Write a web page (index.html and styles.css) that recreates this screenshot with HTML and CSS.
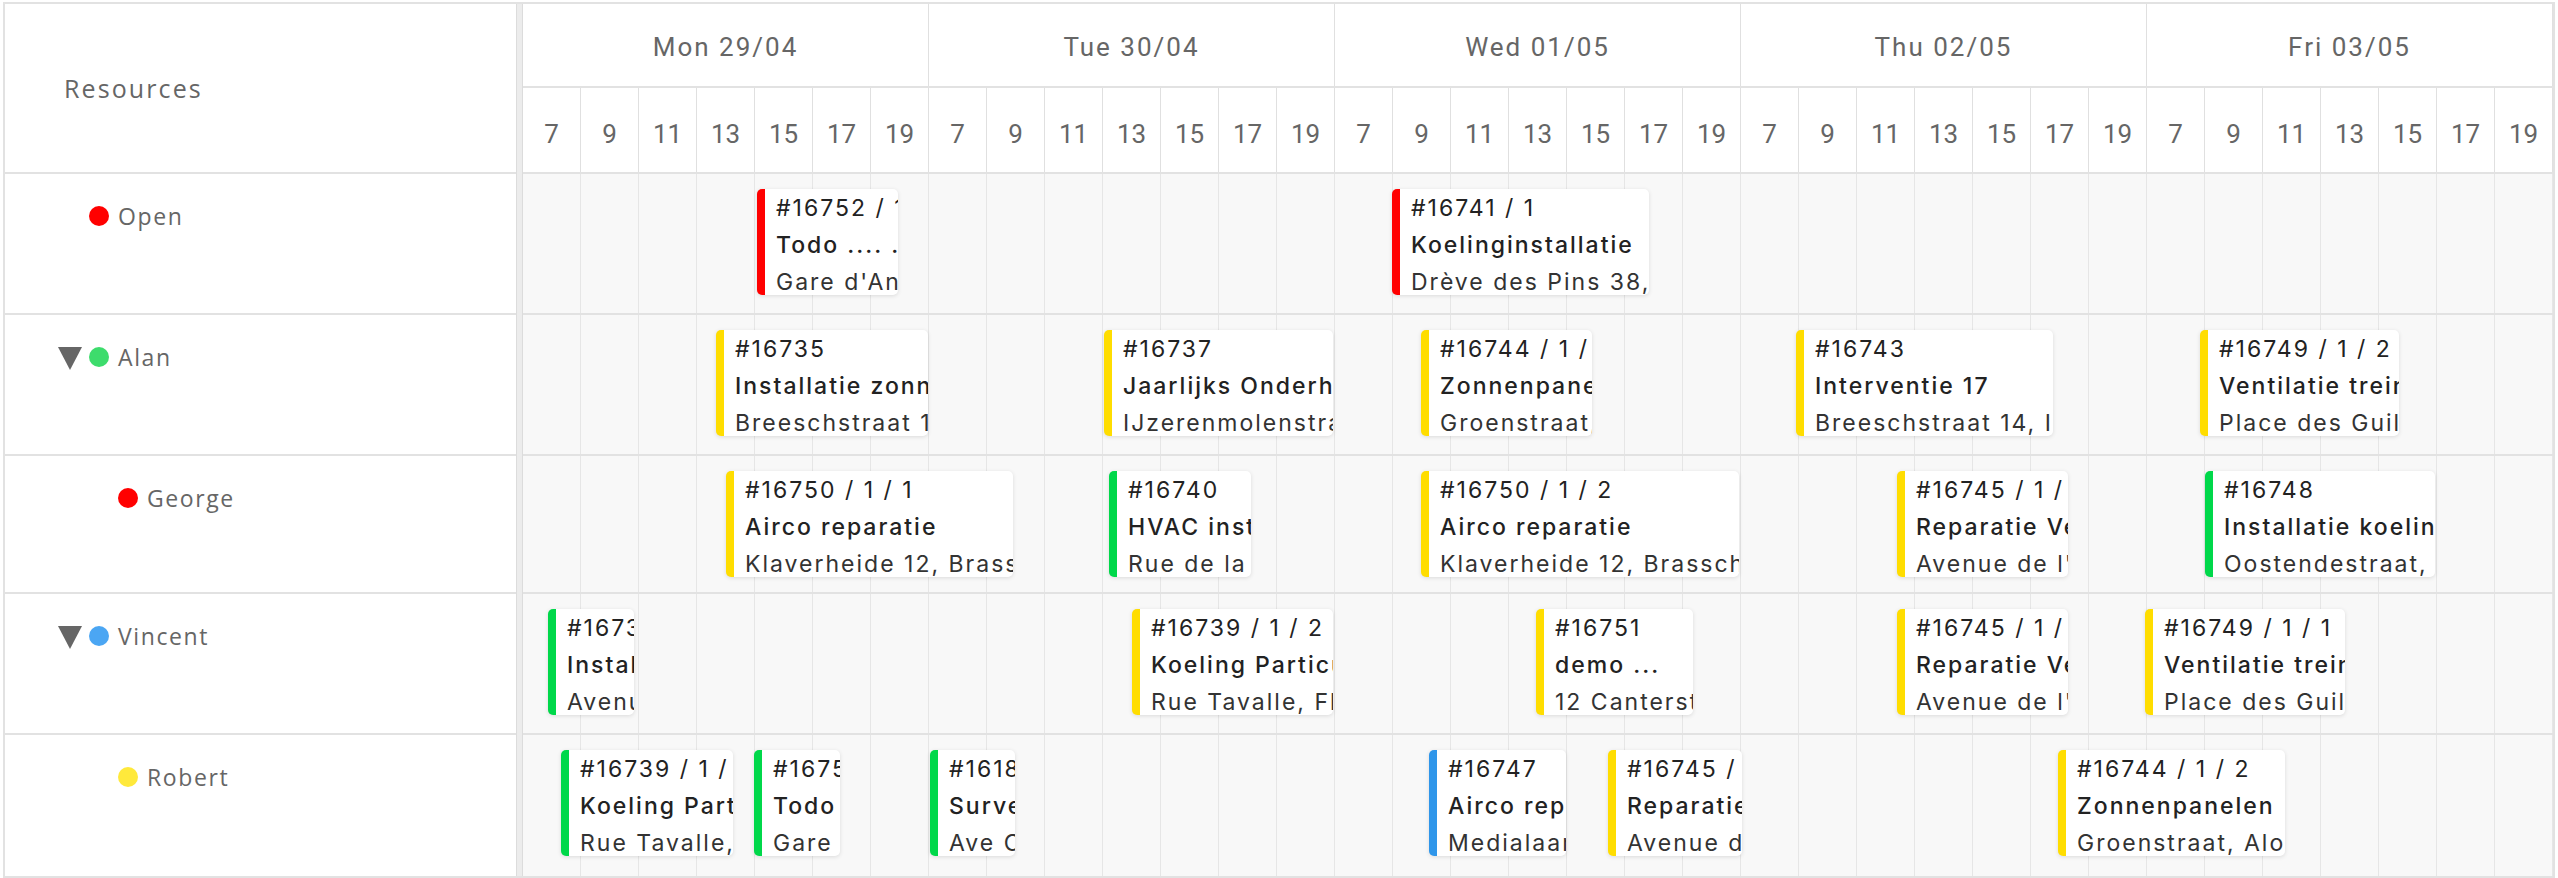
FILE: index.html
```html
<!DOCTYPE html>
<html lang="nl">
<head>
    <meta charset="UTF-8">
    <meta name="viewport" content="width=device-width, initial-scale=1.0">
    <title>Planning</title>
    <link rel="stylesheet" href="styles.css">
</head>
<body>
    <div class="scheduler">
        <!-- resources -->
        <div class="resource-pane">
            <div class="resource-head">Resources</div>
            <div class="resource-row">
                <span class="dot red"></span><span class="res-name">Open</span>
            </div>
            <div class="resource-row group">
                <svg class="caret" viewBox="0 0 24 24"><polygon points="0,1 24,1 12,24" fill="#666" /></svg>
                <span class="dot green"></span><span class="res-name">Alan</span>
            </div>
            <div class="resource-row child short">
                <span class="dot red"></span><span class="res-name">George</span>
            </div>
            <div class="resource-row group">
                <svg class="caret" viewBox="0 0 24 24"><polygon points="0,1 24,1 12,24" fill="#666" /></svg>
                <span class="dot blue"></span><span class="res-name">Vincent</span>
            </div>
            <div class="resource-row child last">
                <span class="dot yellow"></span><span class="res-name">Robert</span>
            </div>
        </div>

        <div class="splitter"></div>

        <!-- timeline -->
        <div class="timeline">
            <div class="day-row">
                <div class="day">Mon 29/04</div>
                <div class="day">Tue 30/04</div>
                <div class="day">Wed 01/05</div>
                <div class="day">Thu 02/05</div>
                <div class="day">Fri 03/05</div>
            </div>
            <div class="hour-row">
                <div class="hour">7</div><div class="hour">9</div><div class="hour">11</div><div class="hour">13</div><div class="hour">15</div><div class="hour">17</div><div class="hour">19</div>
                <div class="hour">7</div><div class="hour">9</div><div class="hour">11</div><div class="hour">13</div><div class="hour">15</div><div class="hour">17</div><div class="hour">19</div>
                <div class="hour">7</div><div class="hour">9</div><div class="hour">11</div><div class="hour">13</div><div class="hour">15</div><div class="hour">17</div><div class="hour">19</div>
                <div class="hour">7</div><div class="hour">9</div><div class="hour">11</div><div class="hour">13</div><div class="hour">15</div><div class="hour">17</div><div class="hour">19</div>
                <div class="hour">7</div><div class="hour">9</div><div class="hour">11</div><div class="hour">13</div><div class="hour">15</div><div class="hour">17</div><div class="hour">19</div>
            </div>

            <!-- Open -->
            <div class="lane">
                <div class="event red" style="left:234px;width:141px">
                    <div class="ev-id">#16752 / 1 / 1</div>
                    <div class="ev-title">Todo .... ....</div>
                    <div class="ev-addr">Gare d'Anvers 12, Brussel</div>
                </div>
                <div class="event red" style="left:869px;width:257px">
                    <div class="ev-id">#16741 / 1</div>
                    <div class="ev-title">Koelinginstallatie</div>
                    <div class="ev-addr">Drève des Pins 38, Bruxelles</div>
                </div>
            </div>

            <!-- Alan -->
            <div class="lane">
                <div class="event yellow" style="left:193px;width:212px">
                    <div class="ev-id">#16735</div>
                    <div class="ev-title">Installatie zonnepanelen</div>
                    <div class="ev-addr">Breeschstraat 14, Izegem</div>
                </div>
                <div class="event yellow" style="left:581px;width:229px">
                    <div class="ev-id">#16737</div>
                    <div class="ev-title">Jaarlijks Onderhoud</div>
                    <div class="ev-addr">IJzerenmolenstraat 4, Ieper</div>
                </div>
                <div class="event yellow" style="left:898px;width:171px">
                    <div class="ev-id">#16744 / 1 / 1</div>
                    <div class="ev-title">Zonnenpanelen</div>
                    <div class="ev-addr">Groenstraat, Alost</div>
                </div>
                <div class="event yellow" style="left:1273px;width:257px">
                    <div class="ev-id">#16743</div>
                    <div class="ev-title">Interventie 17</div>
                    <div class="ev-addr">Breeschstraat 14, Izegem</div>
                </div>
                <div class="event yellow" style="left:1677px;width:199px">
                    <div class="ev-id">#16749 / 1 / 2</div>
                    <div class="ev-title">Ventilatie trein</div>
                    <div class="ev-addr">Place des Guildes 5</div>
                </div>
            </div>

            <!-- George -->
            <div class="lane short">
                <div class="event yellow" style="left:203px;width:287px">
                    <div class="ev-id">#16750 / 1 / 1</div>
                    <div class="ev-title">Airco reparatie</div>
                    <div class="ev-addr">Klaverheide 12, Brasschaat</div>
                </div>
                <div class="event green" style="left:586px;width:142px">
                    <div class="ev-id">#16740</div>
                    <div class="ev-title">HVAC installatie</div>
                    <div class="ev-addr">Rue de la Loi 1</div>
                </div>
                <div class="event yellow" style="left:898px;width:318px">
                    <div class="ev-id">#16750 / 1 / 2</div>
                    <div class="ev-title">Airco reparatie</div>
                    <div class="ev-addr">Klaverheide 12, Brasschaat</div>
                </div>
                <div class="event yellow" style="left:1374px;width:171px">
                    <div class="ev-id">#16745 / 1 / 1</div>
                    <div class="ev-title">Reparatie Ventilatie</div>
                    <div class="ev-addr">Avenue de l'Europe</div>
                </div>
                <div class="event green" style="left:1682px;width:230px">
                    <div class="ev-id">#16748</div>
                    <div class="ev-title">Installatie koeling</div>
                    <div class="ev-addr">Oostendestraat, Roeselare</div>
                </div>
            </div>

            <!-- Vincent -->
            <div class="lane">
                <div class="event green" style="left:25px;width:86px">
                    <div class="ev-id">#16738</div>
                    <div class="ev-title">Installatie</div>
                    <div class="ev-addr">Avenue Louise</div>
                </div>
                <div class="event yellow" style="left:609px;width:201px">
                    <div class="ev-id">#16739 / 1 / 2</div>
                    <div class="ev-title">Koeling Particulier</div>
                    <div class="ev-addr">Rue Tavalle, Fleurus</div>
                </div>
                <div class="event yellow" style="left:1013px;width:157px">
                    <div class="ev-id">#16751</div>
                    <div class="ev-title">demo ...</div>
                    <div class="ev-addr">12 Cantersteen</div>
                </div>
                <div class="event yellow" style="left:1374px;width:171px">
                    <div class="ev-id">#16745 / 1 / 2</div>
                    <div class="ev-title">Reparatie Ventilatie</div>
                    <div class="ev-addr">Avenue de l'Europe</div>
                </div>
                <div class="event yellow" style="left:1622px;width:200px">
                    <div class="ev-id">#16749 / 1 / 1</div>
                    <div class="ev-title">Ventilatie trein</div>
                    <div class="ev-addr">Place des Guildes 5</div>
                </div>
            </div>

            <!-- Robert -->
            <div class="lane last">
                <div class="event green" style="left:38px;width:172px">
                    <div class="ev-id">#16739 / 1 / 1</div>
                    <div class="ev-title">Koeling Particulier</div>
                    <div class="ev-addr">Rue Tavalle, Fleurus</div>
                </div>
                <div class="event green" style="left:231px;width:86px">
                    <div class="ev-id">#16752</div>
                    <div class="ev-title">Todo</div>
                    <div class="ev-addr">Gare d'Anvers</div>
                </div>
                <div class="event green" style="left:407px;width:85px">
                    <div class="ev-id">#16181</div>
                    <div class="ev-title">Surveillance</div>
                    <div class="ev-addr">Ave Caprice</div>
                </div>
                <div class="event blue" style="left:906px;width:137px">
                    <div class="ev-id">#16747</div>
                    <div class="ev-title">Airco reparatie</div>
                    <div class="ev-addr">Medialaan 28</div>
                </div>
                <div class="event yellow" style="left:1085px;width:134px">
                    <div class="ev-id">#16745 / 1 / 3</div>
                    <div class="ev-title">Reparatie Ventilatie</div>
                    <div class="ev-addr">Avenue de l'Europe</div>
                </div>
                <div class="event yellow" style="left:1535px;width:227px">
                    <div class="ev-id">#16744 / 1 / 2</div>
                    <div class="ev-title">Zonnenpanelen</div>
                    <div class="ev-addr">Groenstraat, Alost</div>
                </div>
            </div>
        </div>
    </div>
</body>
</html>
```

FILE: styles.css
```css
body {
    margin: 0;
    background-color: #fff;
    font-family: 'Roboto', 'Liberation Sans', sans-serif;
    color: #666;
}

.scheduler {
    display: flex;
    margin: 2px 0 0 3px;
    width: 2548px;
    border: 2px solid #e2e2e2;
}

/* ---- resources ---- */

.resource-pane {
    width: 511px;
    display: flex;
    flex-direction: column;
}

.resource-head {
    height: 170px;
    box-sizing: border-box;
    border-bottom: 2px solid #e2e2e2;
    display: flex;
    align-items: center;
    padding-left: 59px;
    font-family: 'Open Sans', sans-serif;
    font-size: 25px;
    letter-spacing: 2.1px;
    color: #666;
}

.resource-row {
    height: 141px;
    box-sizing: border-box;
    border-bottom: 2px solid #e2e2e2;
    display: flex;
    align-items: flex-start;
    padding: 32px 0 0 84px;
    font-family: 'Open Sans', sans-serif;
    font-size: 23px;
    letter-spacing: 1.6px;
    color: #666;
}

.resource-row.group {
    padding-left: 53px;
}

.resource-row.child {
    padding-left: 113px;
}

.resource-row.short {
    height: 138px;
}

.resource-row.last {
    border-bottom: none;
}

.caret {
    width: 24px;
    height: 24px;
    margin: -1px 7px 0 0;
}

.dot {
    width: 20px;
    height: 20px;
    border-radius: 50%;
    margin-right: 9px;
    flex-shrink: 0;
}

.dot.red { background-color: #ff0000; }
.dot.green { background-color: #3ddc6c; }
.dot.blue { background-color: #4ba6f3; }
.dot.yellow { background-color: #ffe93b; }

.res-name {
    line-height: 20px;
}

.splitter {
    width: 5px;
    background-color: #ececec;
    border-left: 1px solid #dcdcdc;
    border-right: 1px solid #dcdcdc;
}

/* ---- timeline ---- */

.timeline {
    width: 2030px;
    display: flex;
    flex-direction: column;
}

.day-row,
.hour-row {
    display: flex;
    box-sizing: border-box;
    border-bottom: 2px solid #e2e2e2;
    background-color: #fff;
}

.day-row {
    height: 84px;
}

.hour-row {
    height: 86px;
}

.day {
    width: 406px;
    box-sizing: border-box;
    border-right: 1px solid #e0e0e0;
    display: flex;
    align-items: center;
    justify-content: center;
    padding-top: 4px;
    font-size: 26px;
    letter-spacing: 2px;
}

.hour {
    width: 58px;
    box-sizing: border-box;
    border-right: 1px solid #e0e0e0;
    display: flex;
    align-items: center;
    justify-content: center;
    padding-top: 8px;
    font-size: 26px;
}

.lane {
    position: relative;
    height: 141px;
    box-sizing: border-box;
    border-bottom: 2px solid #e2e2e2;
    background-color: #f8f8f8;
    background-image: repeating-linear-gradient(90deg, transparent 0 57px, #e6e6e6 57px 58px);
}

.lane.short {
    height: 138px;
}

.lane.last {
    border-bottom: none;
}

/* ---- events ---- */

.event {
    position: absolute;
    top: 15px;
    height: 106px;
    box-sizing: border-box;
    padding: 1px 0 0 11px;
    background-color: #fff;
    border-left: 8px solid #ccc;
    border-radius: 5px;
    box-shadow: 0 1px 4px rgba(0, 0, 0, 0.12);
    overflow: hidden;
    white-space: nowrap;
    font-family: 'Inter', sans-serif;
    font-size: 23px;
    letter-spacing: 2px;
    line-height: 37px;
    color: #222;
}

.event.red { border-left-color: #ff0000; }
.event.yellow { border-left-color: #ffdd00; }
.event.green { border-left-color: #00d84a; }
.event.blue { border-left-color: #2f96ea; }

.ev-title {
    font-weight: 500;
}

.ev-addr {
    color: #333;
}
```
